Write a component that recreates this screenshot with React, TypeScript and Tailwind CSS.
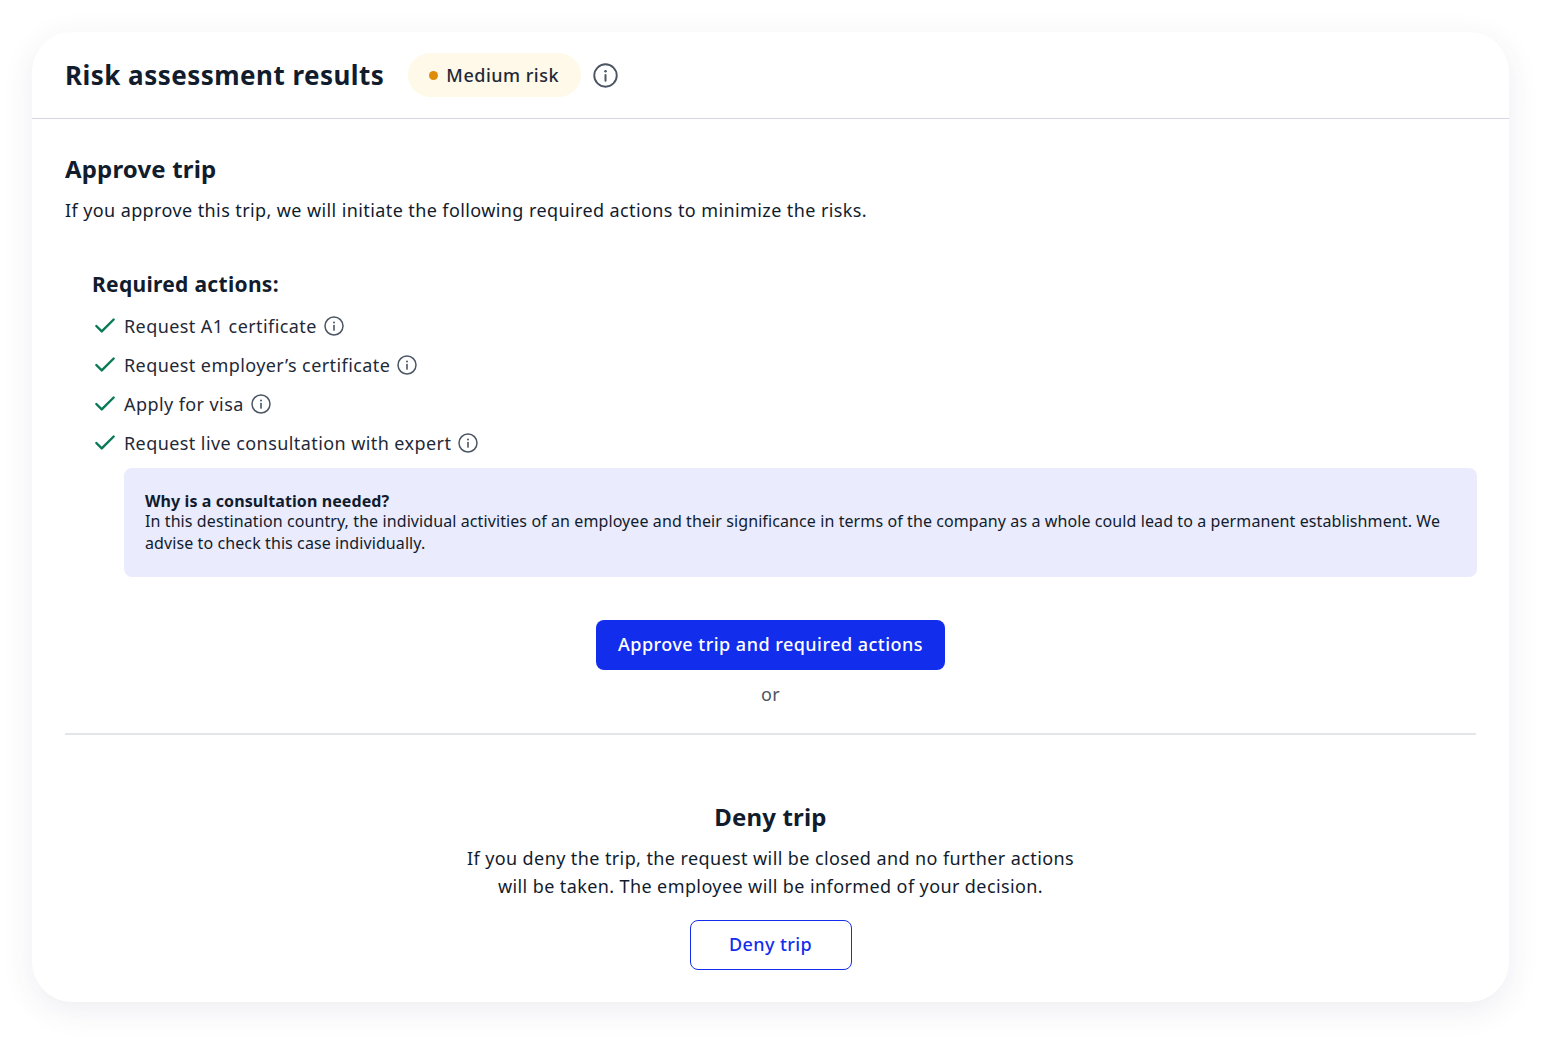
import { Check } from 'lucide-react'

const font = { fontFamily: '"Noto Sans", sans-serif' }

function InfoIcon({ size }: { size: number }) {
  return (
    <svg width={size} height={size} viewBox="0 0 20 20" fill="none" className="shrink-0">
      <circle cx="10" cy="10" r="9" stroke="#4b5563" strokeWidth="1.5" />
      <circle cx="10" cy="6.6" r="1" fill="#4b5563" />
      <path d="M10 9.5v4.6" stroke="#4b5563" strokeWidth="1.6" strokeLinecap="round" />
    </svg>
  )
}

const actions = [
  'Request A1 certificate',
  'Request employer’s certificate',
  'Apply for visa',
  'Request live consultation with expert',
]

export default function App() {
  return (
    <div style={font} className="h-[1050px] w-[1558px] bg-white pt-[32px] pl-[32px] text-[#111c2d]">
      <div className="h-[970px] w-[1477px] rounded-[40px] bg-white shadow-[0_8px_32px_rgba(60,60,110,0.09)]">
        <header className="flex h-[87px] items-center border-b border-[#d4d7e3] pl-[33px]">
          <h1 className="text-[26px] leading-[36px] font-bold tracking-[0.47px]">Risk assessment results</h1>
          <span className="ml-[24px] flex h-[44px] items-center gap-[8px] rounded-[22px] bg-[#fef9e8] pr-[22px] pl-[21px] text-[18px] font-medium tracking-[0.5px] text-[#1f2937]">
            <span className="h-[9px] w-[9px] rounded-full bg-[#e08c0b]" />
            Medium risk
          </span>
          <span className="ml-[12px]">
            <InfoIcon size={25} />
          </span>
        </header>

        <main className="px-[33px] pt-[32px]">
          <h2 className="text-[24px] leading-[36px] font-bold tracking-[0.15px]">Approve trip</h2>
          <p className="mt-[9px] text-[18px] leading-[28px] tracking-[0.4px]">
            If you approve this trip, we will initiate the following required actions to minimize the risks.
          </p>

          <section className="mt-[44px] mr-[-1px] pl-[27px]">
            <h3 className="text-[21px] leading-[32px] font-bold tracking-[0.3px]">Required actions:</h3>
            <ul className="mt-[12px] flex flex-col gap-[11px]">
              {actions.map((a) => (
                <li key={a} className="flex h-[28px] items-center text-[18px] tracking-[0.42px] text-[#1f2937]">
                  <Check size={26} strokeWidth={2.25} className="mr-[6px] shrink-0 text-[#0a7a56]" />
                  <span className="mr-[7px]">{a}</span>
                  <InfoIcon size={20} />
                </li>
              ))}
            </ul>
            <div className="mt-[11px] ml-[32px] h-[109px] rounded-[8px] bg-[#eaebfd] px-[21px] pt-[24px] text-[16px] leading-[22px] tracking-[0.095px]">
              <p className="leading-[18px] font-bold">Why is a consultation needed?</p>
              <p>
                In this destination country, the individual activities of an employee and their significance in terms of
                the company as a whole could lead to a permanent establishment. We advise to check this case individually.
              </p>
            </div>
          </section>

          <div className="flex flex-col items-center">
            <button className="mt-[43px] h-[50px] w-[349px] rounded-[8px] bg-[#122eec] pb-[2px] text-[18px] font-medium tracking-[0.47px] text-white">
              Approve trip and required actions
            </button>
            <span className="mt-[10px] text-[18px] leading-[28px] tracking-[0.4px] text-[#4b5563]">or</span>
          </div>

          <hr className="mt-[25px] border-t-2 border-[#e2e5e9]" />

          <div className="mt-[64px] flex flex-col items-center">
            <h2 className="text-[24px] leading-[36px] font-bold tracking-[0.15px]">Deny trip</h2>
            <p className="mt-[9px] text-center text-[18px] leading-[28px] tracking-[0.4px]">
              If you deny the trip, the request will be closed and no further actions
              <br />
              will be taken. The employee will be informed of your decision.
            </p>
            <button className="mt-[20px] h-[50px] w-[162px] rounded-[8px] border-[1.5px] border-[#122eec] bg-white pb-[2px] text-[18px] font-medium tracking-[0.4px] text-[#122eec]">
              Deny trip
            </button>
          </div>
        </main>
      </div>
    </div>
  )
}
